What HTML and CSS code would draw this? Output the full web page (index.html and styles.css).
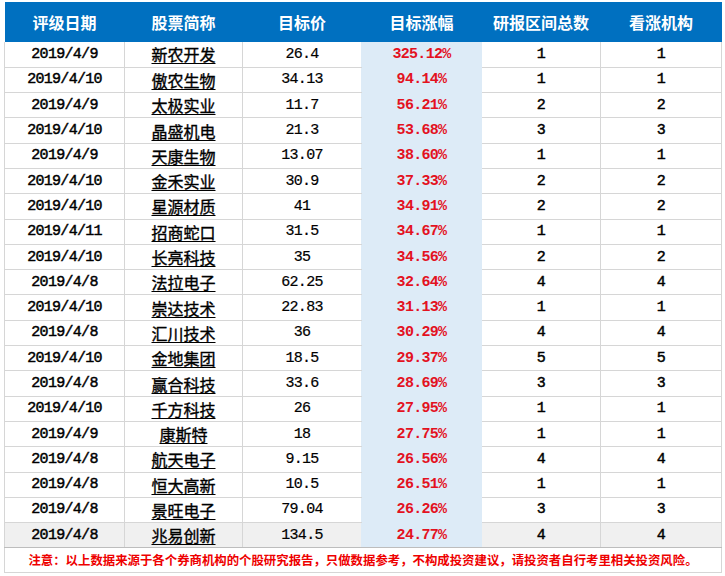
FILE: index.html
```html
<!DOCTYPE html>
<html lang="zh">
<head>
<meta charset="utf-8">
<link rel="stylesheet" href="styles.css">
</head>
<body>
<table class="rank">
  <colgroup>
    <col class="c1"><col class="c2"><col class="c3"><col class="c4"><col class="c5"><col class="c6">
  </colgroup>
  <thead>
    <tr><th>评级日期</th><th>股票简称</th><th>目标价</th><th>目标涨幅</th><th>研报区间总数</th><th>看涨机构</th></tr>
  </thead>
  <tbody>
    <tr><td class="num">2019/4/9</td><td class="name">新农开发</td><td class="num price">26.4</td><td class="pct">325.12%</td><td class="num">1</td><td class="num">1</td></tr>
    <tr><td class="num">2019/4/10</td><td class="name">傲农生物</td><td class="num price">34.13</td><td class="pct">94.14%</td><td class="num">1</td><td class="num">1</td></tr>
    <tr><td class="num">2019/4/9</td><td class="name">太极实业</td><td class="num price">11.7</td><td class="pct">56.21%</td><td class="num">2</td><td class="num">2</td></tr>
    <tr><td class="num">2019/4/10</td><td class="name">晶盛机电</td><td class="num price">21.3</td><td class="pct">53.68%</td><td class="num">3</td><td class="num">3</td></tr>
    <tr><td class="num">2019/4/9</td><td class="name">天康生物</td><td class="num price">13.07</td><td class="pct">38.60%</td><td class="num">1</td><td class="num">1</td></tr>
    <tr><td class="num">2019/4/10</td><td class="name">金禾实业</td><td class="num price">30.9</td><td class="pct">37.33%</td><td class="num">2</td><td class="num">2</td></tr>
    <tr><td class="num">2019/4/10</td><td class="name">星源材质</td><td class="num price">41</td><td class="pct">34.91%</td><td class="num">2</td><td class="num">2</td></tr>
    <tr><td class="num">2019/4/11</td><td class="name">招商蛇口</td><td class="num price">31.5</td><td class="pct">34.67%</td><td class="num">1</td><td class="num">1</td></tr>
    <tr><td class="num">2019/4/10</td><td class="name">长亮科技</td><td class="num price">35</td><td class="pct">34.56%</td><td class="num">2</td><td class="num">2</td></tr>
    <tr><td class="num">2019/4/8</td><td class="name">法拉电子</td><td class="num price">62.25</td><td class="pct">32.64%</td><td class="num">4</td><td class="num">4</td></tr>
    <tr><td class="num">2019/4/10</td><td class="name">崇达技术</td><td class="num price">22.83</td><td class="pct">31.13%</td><td class="num">1</td><td class="num">1</td></tr>
    <tr><td class="num">2019/4/8</td><td class="name">汇川技术</td><td class="num price">36</td><td class="pct">30.29%</td><td class="num">4</td><td class="num">4</td></tr>
    <tr><td class="num">2019/4/10</td><td class="name">金地集团</td><td class="num price">18.5</td><td class="pct">29.37%</td><td class="num">5</td><td class="num">5</td></tr>
    <tr><td class="num">2019/4/8</td><td class="name">赢合科技</td><td class="num price">33.6</td><td class="pct">28.69%</td><td class="num">3</td><td class="num">3</td></tr>
    <tr><td class="num">2019/4/10</td><td class="name">千方科技</td><td class="num price">26</td><td class="pct">27.95%</td><td class="num">1</td><td class="num">1</td></tr>
    <tr><td class="num">2019/4/9</td><td class="name">康斯特</td><td class="num price">18</td><td class="pct">27.75%</td><td class="num">1</td><td class="num">1</td></tr>
    <tr><td class="num">2019/4/8</td><td class="name">航天电子</td><td class="num price">9.15</td><td class="pct">26.56%</td><td class="num">4</td><td class="num">4</td></tr>
    <tr><td class="num">2019/4/8</td><td class="name">恒大高新</td><td class="num price">10.5</td><td class="pct">26.51%</td><td class="num">1</td><td class="num">1</td></tr>
    <tr><td class="num">2019/4/8</td><td class="name">景旺电子</td><td class="num price">79.04</td><td class="pct">26.26%</td><td class="num">3</td><td class="num">3</td></tr>
    <tr class="last"><td class="num">2019/4/8</td><td class="name">兆易创新</td><td class="num price">134.5</td><td class="pct">24.77%</td><td class="num">4</td><td class="num">4</td></tr>
  </tbody>
  <tfoot>
    <tr><td colspan="6" class="note">注意：以上数据来源于各个券商机构的个股研究报告，只做数据参考，不构成投资建议，请投资者自行考里相关投资风险。</td></tr>
  </tfoot>
</table>
</body>
</html>
```

FILE: styles.css
```css
html, body {
  margin: 0;
  padding: 0;
  background: #ffffff;
}

body {
  padding: 2px 0 0 4px;
}

.rank {
  border-collapse: collapse;
  table-layout: fixed;
  width: 717px;
  font-family: "Noto Sans CJK SC", sans-serif;
}

.c1 { width: 120px; }
.c2 { width: 118px; }
.c3 { width: 119px; }
.c4 { width: 120px; }
.c5 { width: 119px; }
.c6 { width: 121px; }

.rank th {
  background: #0070c0;
  color: #ffffff;
  font-size: 16px;
  font-weight: bold;
  height: 40px;
  padding: 0;
  text-align: center;
  border: none;
}

.rank td {
  height: 25.3px;
  padding: 0;
  text-align: center;
  border: 1px solid #d6d6d6;
  color: #000000;
  line-height: 1;
  box-sizing: border-box;
}

.rank tbody tr:first-child td {
  border-top: none;
}

.rank td.num {
  font-family: "Liberation Mono", "DejaVu Sans Mono", monospace;
  font-size: 15px;
  letter-spacing: -0.7px;
  font-weight: normal;
  -webkit-text-stroke: 0.45px #000000;
}

.rank td.price {
  -webkit-text-stroke: 0.2px #000000;
  border-right-color: #ddebf7;
}

.rank td.name {
  font-size: 16px;
  text-decoration: underline;
  text-underline-offset: 2px;
  -webkit-text-stroke: 0.35px #000000;
}

.rank td.pct {
  background: #ddebf7;
  color: #e3121f;
  font-family: "Liberation Mono", "DejaVu Sans Mono", monospace;
  font-size: 15px;
  letter-spacing: -0.7px;
  font-weight: bold;
  border-color: #ddebf7;
}

.rank tr.last td {
  background: #f0f0f0;
  border-bottom: 1px solid #bdbdbd;
}

.rank tr.last td.pct {
  background: #ddebf7;
}

.rank td.note {
  height: 25px;
  color: #ee0000;
  font-size: 12.4px;
  font-weight: bold;
  letter-spacing: 0;
  border-top: 1px solid #bdbdbd;
}
```
